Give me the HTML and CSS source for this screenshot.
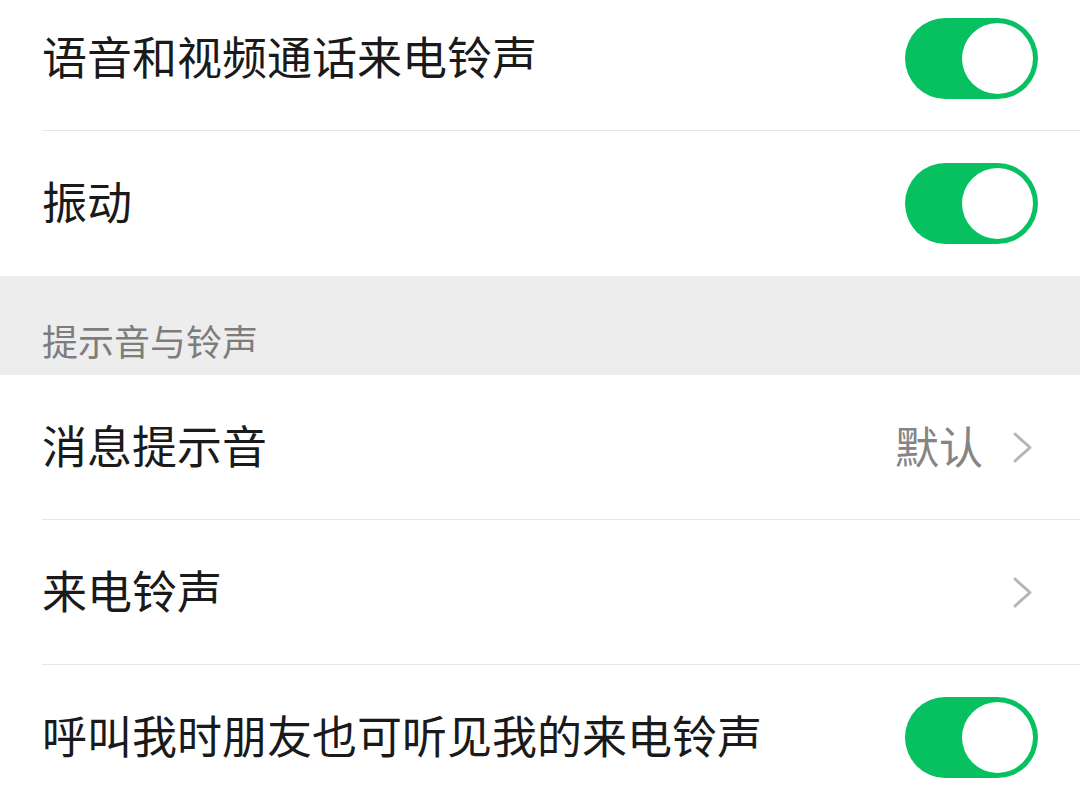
FILE: index.html
```html
<!DOCTYPE html>
<html lang="zh-CN">
<head>
<meta charset="utf-8">
<title>新消息通知</title>
<link rel="stylesheet" href="styles.css">
</head>
<body>
<div class="page">
  <div class="group first">
    <div class="row">
      <div class="row-inner">
        <span class="label">语音和视频通话来电铃声</span>
        <span class="switch on"><span class="knob"></span></span>
      </div>
    </div>
    <div class="row last">
      <div class="row-inner">
        <span class="label">振动</span>
        <span class="switch on"><span class="knob"></span></span>
      </div>
    </div>
  </div>
  <div class="section-header">提示音与铃声</div>
  <div class="group">
    <div class="row">
      <div class="row-inner">
        <span class="label">消息提示音</span>
        <span class="value">默认</span>
        <svg class="chevron" width="19" height="31" viewBox="0 0 19 31"><polyline points="2,2 17,15.5 2,29" fill="none" stroke="#b5b5b5" stroke-width="3" stroke-linecap="round" stroke-linejoin="round"/></svg>
      </div>
    </div>
    <div class="row">
      <div class="row-inner">
        <span class="label">来电铃声</span>
        <svg class="chevron" width="19" height="31" viewBox="0 0 19 31"><polyline points="2,2 17,15.5 2,29" fill="none" stroke="#b5b5b5" stroke-width="3" stroke-linecap="round" stroke-linejoin="round"/></svg>
      </div>
    </div>
    <div class="row last">
      <div class="row-inner">
        <span class="label">呼叫我时朋友也可听见我的来电铃声</span>
        <span class="switch on"><span class="knob"></span></span>
      </div>
    </div>
  </div>
</div>
</body>
</html>
```

FILE: styles.css
```css
html, body {
  margin: 0;
  padding: 0;
  background: #ffffff;
}
body {
  width: 1080px;
  height: 810px;
  overflow: hidden;
  font-family: "Noto Sans CJK SC", "Noto Sans", sans-serif;
  color: #1a1a1a;
}
.page {
  display: flex;
  flex-direction: column;
}
.group {
  background: #ffffff;
}
.group.first {
  margin-top: -14px;
}
.row {
  padding-left: 42px;
  height: 145px;
  box-sizing: border-box;
  display: flex;
}
.row-inner {
  flex: 1;
  display: flex;
  align-items: center;
  padding-right: 42px;
  border-bottom: 1px solid #e6e6e6;
}
.row.last .row-inner {
  border-bottom: 1px solid transparent;
}
.label {
  flex: 1;
  font-size: 45px;
  line-height: 1;
  padding-bottom: 5px;
  white-space: nowrap;
}
.value {
  font-size: 44px;
  line-height: 1;
  padding-bottom: 5px;
  color: #858585;
  margin-right: 30px;
}
.chevron {
  display: block;
  margin-right: 6px;
}
.switch {
  position: relative;
  display: block;
  width: 133px;
  height: 81px;
  border-radius: 41px;
  background: #07c160;
}
.switch .knob {
  position: absolute;
  top: 5px;
  right: 5px;
  width: 71px;
  height: 71px;
  border-radius: 50%;
  background: #ffffff;
}
.section-header {
  height: 99px;
  box-sizing: border-box;
  background: #ededed;
  padding: 29px 0 0 42px;
  display: flex;
  align-items: center;
  font-size: 36px;
  line-height: 1;
  color: #7d7d7d;
}
```
